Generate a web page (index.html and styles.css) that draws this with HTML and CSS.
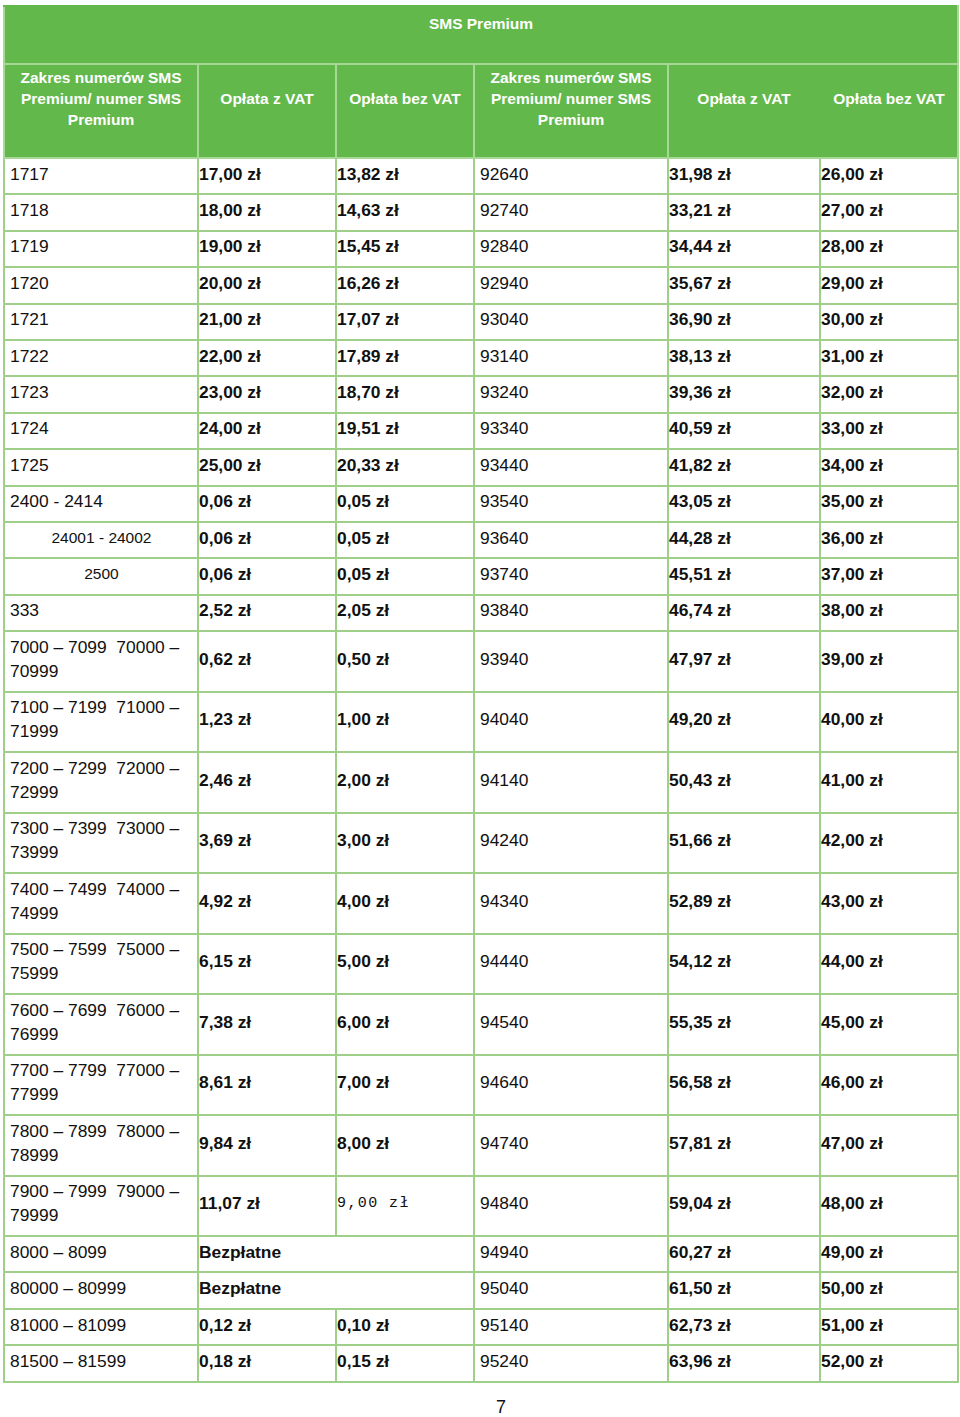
FILE: index.html
```html
<!DOCTYPE html>
<html lang="pl">
<head>
<meta charset="utf-8">
<title>SMS Premium</title>
<link rel="stylesheet" href="styles.css">
</head>
<body>
<table class="tbl">
  <colgroup>
    <col class="c1"><col class="c2"><col class="c3"><col class="c4"><col class="c5"><col class="c6">
  </colgroup>
  <thead>
    <tr class="title"><th colspan="6">SMS Premium</th></tr>
    <tr class="head">
      <th>Zakres numerów SMS Premium/ numer SMS Premium</th>
      <th>Opłata z VAT</th>
      <th>Opłata bez VAT</th>
      <th>Zakres numerów SMS Premium/ numer SMS Premium</th>
      <th class="nr">Opłata z VAT</th>
      <th class="nl">Opłata bez VAT</th>
    </tr>
  </thead>
  <tbody>
    <tr class="s"><td class="n">1717</td><td class="b">17,00 zł</td><td class="b">13,82 zł</td><td class="n">92640</td><td class="b">31,98 zł</td><td class="b">26,00 zł</td></tr>
    <tr class="s"><td class="n">1718</td><td class="b">18,00 zł</td><td class="b">14,63 zł</td><td class="n">92740</td><td class="b">33,21 zł</td><td class="b">27,00 zł</td></tr>
    <tr class="s"><td class="n">1719</td><td class="b">19,00 zł</td><td class="b">15,45 zł</td><td class="n">92840</td><td class="b">34,44 zł</td><td class="b">28,00 zł</td></tr>
    <tr class="s"><td class="n">1720</td><td class="b">20,00 zł</td><td class="b">16,26 zł</td><td class="n">92940</td><td class="b">35,67 zł</td><td class="b">29,00 zł</td></tr>
    <tr class="s"><td class="n">1721</td><td class="b">21,00 zł</td><td class="b">17,07 zł</td><td class="n">93040</td><td class="b">36,90 zł</td><td class="b">30,00 zł</td></tr>
    <tr class="s"><td class="n">1722</td><td class="b">22,00 zł</td><td class="b">17,89 zł</td><td class="n">93140</td><td class="b">38,13 zł</td><td class="b">31,00 zł</td></tr>
    <tr class="s"><td class="n">1723</td><td class="b">23,00 zł</td><td class="b">18,70 zł</td><td class="n">93240</td><td class="b">39,36 zł</td><td class="b">32,00 zł</td></tr>
    <tr class="s"><td class="n">1724</td><td class="b">24,00 zł</td><td class="b">19,51 zł</td><td class="n">93340</td><td class="b">40,59 zł</td><td class="b">33,00 zł</td></tr>
    <tr class="s"><td class="n">1725</td><td class="b">25,00 zł</td><td class="b">20,33 zł</td><td class="n">93440</td><td class="b">41,82 zł</td><td class="b">34,00 zł</td></tr>
    <tr class="s"><td class="n">2400 - 2414</td><td class="b">0,06 zł</td><td class="b">0,05 zł</td><td class="n">93540</td><td class="b">43,05 zł</td><td class="b">35,00 zł</td></tr>
    <tr class="s"><td class="n sm">24001 - 24002</td><td class="b">0,06 zł</td><td class="b">0,05 zł</td><td class="n">93640</td><td class="b">44,28 zł</td><td class="b">36,00 zł</td></tr>
    <tr class="s"><td class="n sm">2500</td><td class="b">0,06 zł</td><td class="b">0,05 zł</td><td class="n">93740</td><td class="b">45,51 zł</td><td class="b">37,00 zł</td></tr>
    <tr class="s"><td class="n">333</td><td class="b">2,52 zł</td><td class="b">2,05 zł</td><td class="n">93840</td><td class="b">46,74 zł</td><td class="b">38,00 zł</td></tr>
    <tr class="d"><td class="n">7000 – 7099&nbsp; 70000 – 70999</td><td class="b">0,62 zł</td><td class="b">0,50 zł</td><td class="n">93940</td><td class="b">47,97 zł</td><td class="b">39,00 zł</td></tr>
    <tr class="d"><td class="n">7100 – 7199&nbsp; 71000 – 71999</td><td class="b">1,23 zł</td><td class="b">1,00 zł</td><td class="n">94040</td><td class="b">49,20 zł</td><td class="b">40,00 zł</td></tr>
    <tr class="d"><td class="n">7200 – 7299&nbsp; 72000 – 72999</td><td class="b">2,46 zł</td><td class="b">2,00 zł</td><td class="n">94140</td><td class="b">50,43 zł</td><td class="b">41,00 zł</td></tr>
    <tr class="d"><td class="n">7300 – 7399&nbsp; 73000 – 73999</td><td class="b">3,69 zł</td><td class="b">3,00 zł</td><td class="n">94240</td><td class="b">51,66 zł</td><td class="b">42,00 zł</td></tr>
    <tr class="d"><td class="n">7400 – 7499&nbsp; 74000 – 74999</td><td class="b">4,92 zł</td><td class="b">4,00 zł</td><td class="n">94340</td><td class="b">52,89 zł</td><td class="b">43,00 zł</td></tr>
    <tr class="d"><td class="n">7500 – 7599&nbsp; 75000 – 75999</td><td class="b">6,15 zł</td><td class="b">5,00 zł</td><td class="n">94440</td><td class="b">54,12 zł</td><td class="b">44,00 zł</td></tr>
    <tr class="d"><td class="n">7600 – 7699&nbsp; 76000 – 76999</td><td class="b">7,38 zł</td><td class="b">6,00 zł</td><td class="n">94540</td><td class="b">55,35 zł</td><td class="b">45,00 zł</td></tr>
    <tr class="d"><td class="n">7700 – 7799&nbsp; 77000 – 77999</td><td class="b">8,61 zł</td><td class="b">7,00 zł</td><td class="n">94640</td><td class="b">56,58 zł</td><td class="b">46,00 zł</td></tr>
    <tr class="d"><td class="n">7800 – 7899&nbsp; 78000 – 78999</td><td class="b">9,84 zł</td><td class="b">8,00 zł</td><td class="n">94740</td><td class="b">57,81 zł</td><td class="b">47,00 zł</td></tr>
    <tr class="d"><td class="n">7900 – 7999&nbsp; 79000 – 79999</td><td class="b">11,07 zł</td><td class="mono">9,00 zł</td><td class="n">94840</td><td class="b">59,04 zł</td><td class="b">48,00 zł</td></tr>
    <tr class="s"><td class="n">8000 – 8099</td><td class="b" colspan="2">Bezpłatne</td><td class="n">94940</td><td class="b">60,27 zł</td><td class="b">49,00 zł</td></tr>
    <tr class="s"><td class="n">80000 – 80999</td><td class="b" colspan="2">Bezpłatne</td><td class="n">95040</td><td class="b">61,50 zł</td><td class="b">50,00 zł</td></tr>
    <tr class="s"><td class="n">81000 – 81099</td><td class="b">0,12 zł</td><td class="b">0,10 zł</td><td class="n">95140</td><td class="b">62,73 zł</td><td class="b">51,00 zł</td></tr>
    <tr class="s"><td class="n">81500 – 81599</td><td class="b">0,18 zł</td><td class="b">0,15 zł</td><td class="n">95240</td><td class="b">63,96 zł</td><td class="b">52,00 zł</td></tr>
  </tbody>
</table>
<div class="page">7</div>
</body>
</html>
```

FILE: styles.css
```css
html, body {
  margin: 0;
  padding: 0;
  background: #ffffff;
}
body {
  font-family: "Liberation Sans", Arial, sans-serif;
  color: #111111;
}
.tbl {
  margin: 5px 0 0 3px;
  width: 954px;
  table-layout: fixed;
  border-collapse: collapse;
}
.c1 { width: 194px; }
.c2 { width: 138px; }
.c3 { width: 138px; }
.c4 { width: 194px; }
.c5 { width: 152px; }
.c6 { width: 138px; }

th, td { box-sizing: border-box; }

thead th {
  background: #62b84a;
  color: #ffffff;
  font-weight: bold;
  font-size: 15.5px;
  line-height: 21px;
  text-align: center;
  border: 2px solid #a8d896;
}
.title th {
  height: 58px;
  padding: 6px 0 0;
  vertical-align: top;
  border-top-color: #62b84a;
}
.head th {
  height: 94px;
  padding: 0 4px 26px;
  vertical-align: middle;
}
.head th.nr { border-right-color: #62b84a; }
.head th.nl { border-left-color: #62b84a; }

tbody td {
  border: 2px solid #9fd08a;
  font-size: 17.4px;
  vertical-align: middle;
  padding: 0 0 5px 0;
  line-height: 24px;
}
tr.s td { height: 36.4px; }
tr.d td { height: 60.5px; }
td.n { padding-left: 5px; padding-right: 4px; }
td.b { font-weight: bold; padding-left: 0; }
td.sm {
  font-size: 15.5px;
  text-align: center;
}
td.mono {
  font-family: "Liberation Mono", "Courier New", monospace;
  font-size: 15px;
  letter-spacing: 1.4px;
  padding-left: 0;
  padding-bottom: 4px;
}
.page {
  font-size: 18px;
  margin: 14px 0 0 496px;
  color: #111111;
}
```
